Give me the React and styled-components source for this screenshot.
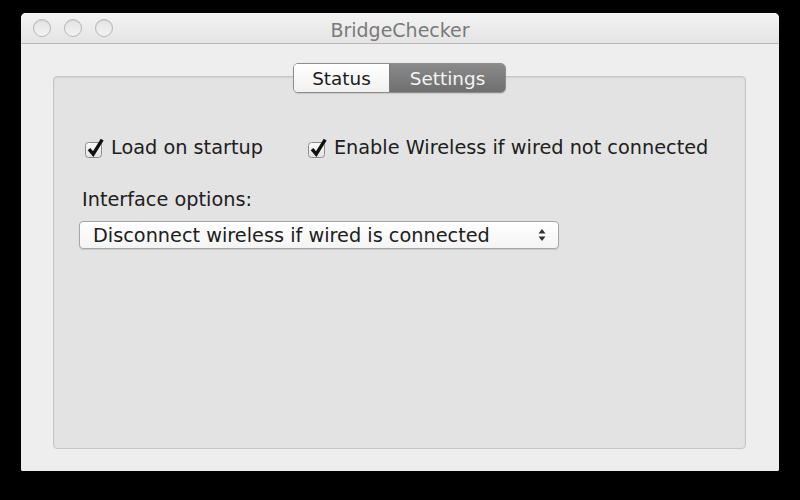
import styled, { createGlobalStyle } from "styled-components";

const GlobalStyle = createGlobalStyle`
  html, body {
    margin: 0;
    padding: 0;
    background: #000;
  }
  body {
    font-family: "DejaVu Sans", "Liberation Sans", sans-serif;
  }
`;

const Screen = styled.div`
  width: 800px;
  height: 500px;
  background: #000;
  padding: 13px 21px 0 21px;
  box-sizing: border-box;
`;

const Window = styled.div`
  width: 758px;
  height: 458px;
  background: #ececec;
  border-radius: 5px 5px 2px 2px;
  display: flex;
  flex-direction: column;
  overflow: hidden;
`;

const TitleBar = styled.div`
  height: 30px;
  flex: none;
  display: flex;
  align-items: center;
  position: relative;
  background: linear-gradient(#f3f3f3, #e4e4e4);
  border-bottom: 1px solid #b9b9b9;
  padding-left: 12px;
  gap: 13px;
`;

const Light = styled.span`
  width: 18px;
  height: 18px;
  border-radius: 50%;
  border: 1.5px solid #b8b8b8;
  background: linear-gradient(#e4e4e4, #f3f3f3);
  box-sizing: border-box;
  box-shadow: inset 0 1px 1px rgba(0, 0, 0, 0.08);
`;

const Title = styled.div`
  position: absolute;
  left: 0;
  right: 0;
  top: 6px;
  text-align: center;
  font-size: 19px;
  color: #7a7a7a;
  pointer-events: none;
`;

const Body = styled.div`
  flex: 1;
  display: flex;
  flex-direction: column;
  padding: 19px 33px 22px 32px;
  background: #eeeeee;
`;

const TabRow = styled.div`
  display: flex;
  justify-content: center;
  margin-bottom: -17px;
  position: relative;
  z-index: 1;
`;

const Segmented = styled.div`
  display: flex;
  height: 28px;
  border: 1px solid #8c8c8c;
  border-radius: 5px;
  overflow: hidden;
  box-shadow: 0 1px 1px rgba(0, 0, 0, 0.12);
`;

const Tab = styled.div`
  display: flex;
  align-items: center;
  justify-content: center;
  width: ${(p) => p.$w}px;
  font-size: 18.4px;
  color: ${(p) => (p.$active ? "#f4f4f4" : "#1c1c1c")};
  background: ${(p) =>
    p.$active
      ? "linear-gradient(#8a8a8a, #6f6f6f)"
      : "linear-gradient(#ffffff, #f1f1f1)"};
  & + & {
    border-left: 1px solid #7a7a7a;
  }
`;

const Panel = styled.div`
  flex: 1;
  background: #e3e3e3;
  border: 1px solid #c6c6c6;
  border-radius: 4px;
  box-shadow: inset 0 1px 2px rgba(0, 0, 0, 0.08);
  padding: 59px 30px 0 25px;
  font-size: 19.3px;
  color: #202020;
`;

const CheckRow = styled.div`
  display: flex;
  align-items: center;
  gap: 44px;
  padding-left: 5px;
`;

const Check = styled.label`
  display: flex;
  align-items: center;
  gap: 3px;
  white-space: nowrap;
`;

const Box = styled.svg`
  flex: none;
  display: block;
`;

const Label = styled.div`
  margin-top: 29px;
  padding-left: 3px;
`;

const Popup = styled.div`
  margin-top: 10px;
  width: 480px;
  height: 28px;
  box-sizing: border-box;
  border: 1px solid #a6a6a6;
  border-radius: 4px;
  background: linear-gradient(#ffffff, #f4f4f4);
  box-shadow: 0 1px 1px rgba(0, 0, 0, 0.12);
  display: flex;
  align-items: center;
  justify-content: space-between;
  padding: 0 11px 0 13px;
  white-space: nowrap;
`;

const CheckIcon = () => (
  <Box width="24" height="22" viewBox="0 0 24 22">
    <defs>
      <linearGradient id="cb" x1="0" y1="0" x2="0" y2="1">
        <stop offset="0" stopColor="#fbfbfb" />
        <stop offset="1" stopColor="#e2e2e2" />
      </linearGradient>
    </defs>
    <rect x="1.5" y="5.5" width="16" height="15" rx="3" fill="url(#cb)" stroke="#8c8c8c" />
    <path
      d="M5 12.2 L9.2 17.2 L18.2 2.6"
      fill="none"
      stroke="#111"
      strokeWidth="3.4"
      strokeLinejoin="miter"
    />
  </Box>
);

const Arrows = () => (
  <Box width="10" height="16" viewBox="0 0 10 16">
    <path d="M5 2 L8.5 6.5 L1.5 6.5 Z" fill="#333" />
    <path d="M5 14 L8.5 9.5 L1.5 9.5 Z" fill="#333" />
  </Box>
);

export default function App() {
  return (
    <>
      <GlobalStyle />
      <Screen>
        <Window>
          <TitleBar>
            <Light />
            <Light />
            <Light />
            <Title>BridgeChecker</Title>
          </TitleBar>
          <Body>
            <TabRow>
              <Segmented>
                <Tab $w={95}>Status</Tab>
                <Tab $w={115} $active>
                  Settings
                </Tab>
              </Segmented>
            </TabRow>
            <Panel>
              <CheckRow>
                <Check>
                  <CheckIcon />
                  Load on startup
                </Check>
                <Check>
                  <CheckIcon />
                  Enable Wireless if wired not connected
                </Check>
              </CheckRow>
              <Label>Interface options:</Label>
              <Popup>
                Disconnect wireless if wired is connected
                <Arrows />
              </Popup>
            </Panel>
          </Body>
        </Window>
      </Screen>
    </>
  );
}
